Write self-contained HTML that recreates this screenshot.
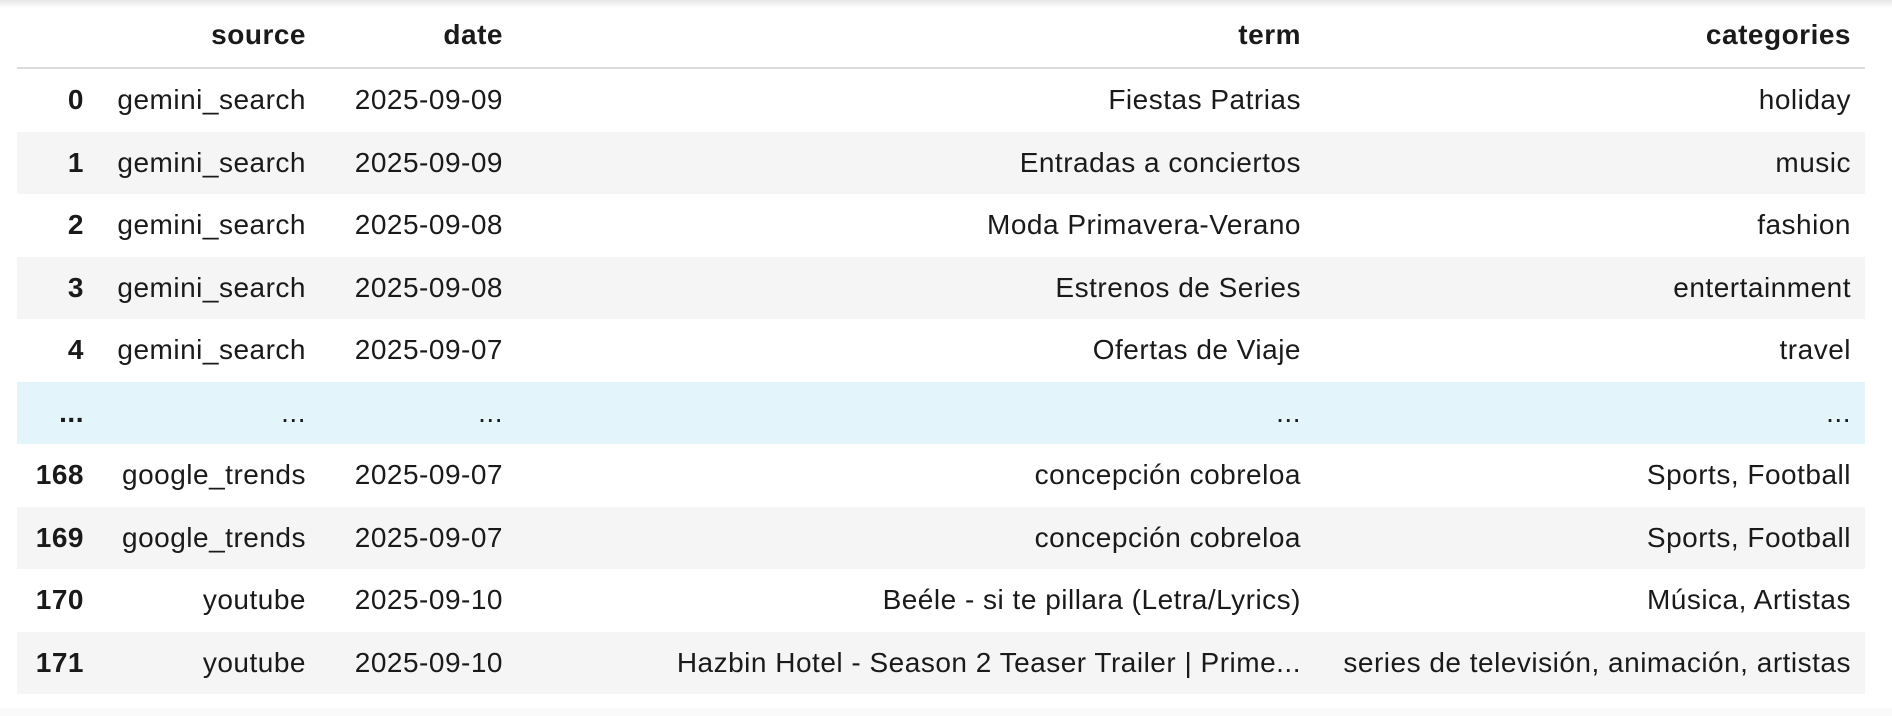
<!DOCTYPE html>
<html><head><meta charset="utf-8"><style>
html,body{margin:0;padding:0;background:#fff;width:1892px;height:716px;overflow:hidden}
body{font-family:"Liberation Sans",sans-serif;color:#1a1a1a;font-size:28px;letter-spacing:0.5px}
.shadow{position:absolute;left:0;top:0;width:1892px;height:8px;background:linear-gradient(#e6e6e6,#fff)}
table{position:absolute;left:17px;top:0;border-collapse:collapse;table-layout:fixed;width:1848px}
th,td{text-align:right;padding:0 14px 0 0;white-space:nowrap;overflow:hidden;line-height:30px}
thead th{height:65px;border-bottom:2px solid #dcdcdc;font-weight:bold;padding-top:2px}
tbody td,tbody th{height:62.5px}
tbody th{font-weight:bold}
tbody tr:nth-child(even){background:#f5f5f5}
tbody tr.e{background:#e3f4fb}
.bot{position:absolute;left:0;top:708px;width:1892px;height:8px;background:#fafafa}
</style></head><body>
<div class="shadow"></div>
<table>
<colgroup><col style="width:81px"><col style="width:222px"><col style="width:197px"><col style="width:798px"><col style="width:550px"></colgroup>
<thead><tr><th></th><th>source</th><th>date</th><th>term</th><th>categories</th></tr></thead>
<tbody>
<tr><th>0</th><td>gemini_search</td><td>2025-09-09</td><td>Fiestas Patrias</td><td>holiday</td></tr>
<tr><th>1</th><td>gemini_search</td><td>2025-09-09</td><td>Entradas a conciertos</td><td>music</td></tr>
<tr><th>2</th><td>gemini_search</td><td>2025-09-08</td><td>Moda Primavera-Verano</td><td>fashion</td></tr>
<tr><th>3</th><td>gemini_search</td><td>2025-09-08</td><td>Estrenos de Series</td><td>entertainment</td></tr>
<tr><th>4</th><td>gemini_search</td><td>2025-09-07</td><td>Ofertas de Viaje</td><td>travel</td></tr>
<tr class="e"><th>...</th><td>...</td><td>...</td><td>...</td><td>...</td></tr>
<tr><th>168</th><td>google_trends</td><td>2025-09-07</td><td>concepción cobreloa</td><td>Sports, Football</td></tr>
<tr><th>169</th><td>google_trends</td><td>2025-09-07</td><td>concepción cobreloa</td><td>Sports, Football</td></tr>
<tr><th>170</th><td>youtube</td><td>2025-09-10</td><td>Beéle - si te pillara (Letra/Lyrics)</td><td>Música, Artistas</td></tr>
<tr><th>171</th><td>youtube</td><td>2025-09-10</td><td>Hazbin Hotel - Season 2 Teaser Trailer | Prime...</td><td>series de televisión, animación, artistas</td></tr>
</tbody></table>
<div class="bot"></div>
</body></html>
